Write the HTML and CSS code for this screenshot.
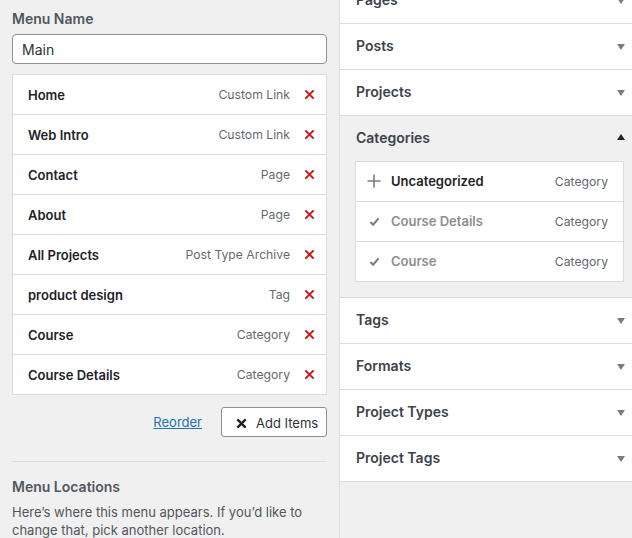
FILE: index.html
```html
<!DOCTYPE html>
<html lang="en">
<head>
<meta charset="utf-8">
<title>Menus</title>
<link rel="stylesheet" href="styles.css">
</head>
<body>
<div class="page">
  <aside class="menu-panel">
    <label class="field-label" for="menu-name">Menu Name</label>
    <input id="menu-name" class="name-input" type="text" value="Main">
    <ul class="menu-items">
      <li class="menu-item"><span class="item-title">Home</span><span class="item-type">Custom Link</span><span class="remove"><svg viewBox="0 0 12 12" width="11" height="11"><path d="M1.5 1.5L10.5 10.5M10.5 1.5L1.5 10.5"/></svg></span></li>
      <li class="menu-item"><span class="item-title">Web Intro</span><span class="item-type">Custom Link</span><span class="remove"><svg viewBox="0 0 12 12" width="11" height="11"><path d="M1.5 1.5L10.5 10.5M10.5 1.5L1.5 10.5"/></svg></span></li>
      <li class="menu-item"><span class="item-title">Contact</span><span class="item-type">Page</span><span class="remove"><svg viewBox="0 0 12 12" width="11" height="11"><path d="M1.5 1.5L10.5 10.5M10.5 1.5L1.5 10.5"/></svg></span></li>
      <li class="menu-item"><span class="item-title">About</span><span class="item-type">Page</span><span class="remove"><svg viewBox="0 0 12 12" width="11" height="11"><path d="M1.5 1.5L10.5 10.5M10.5 1.5L1.5 10.5"/></svg></span></li>
      <li class="menu-item"><span class="item-title">All Projects</span><span class="item-type">Post Type Archive</span><span class="remove"><svg viewBox="0 0 12 12" width="11" height="11"><path d="M1.5 1.5L10.5 10.5M10.5 1.5L1.5 10.5"/></svg></span></li>
      <li class="menu-item"><span class="item-title">product design</span><span class="item-type">Tag</span><span class="remove"><svg viewBox="0 0 12 12" width="11" height="11"><path d="M1.5 1.5L10.5 10.5M10.5 1.5L1.5 10.5"/></svg></span></li>
      <li class="menu-item"><span class="item-title">Course</span><span class="item-type">Category</span><span class="remove"><svg viewBox="0 0 12 12" width="11" height="11"><path d="M1.5 1.5L10.5 10.5M10.5 1.5L1.5 10.5"/></svg></span></li>
      <li class="menu-item"><span class="item-title">Course Details</span><span class="item-type">Category</span><span class="remove"><svg viewBox="0 0 12 12" width="11" height="11"><path d="M1.5 1.5L10.5 10.5M10.5 1.5L1.5 10.5"/></svg></span></li>
    </ul>
    <div class="actions">
      <a class="reorder" href="#">Reorder</a>
      <button class="add-items" type="button"><svg viewBox="0 0 12 12" width="11" height="11"><path d="M1.5 1.5L10.5 10.5M10.5 1.5L1.5 10.5"/></svg><span>Add Items</span></button>
    </div>
    <div class="divider"></div>
    <h3 class="locations-title">Menu Locations</h3>
    <p class="locations-text">Here’s where this menu appears. If you’d like to change that, pick another location.</p>
  </aside>

  <main class="library">
    <section class="acc">
      <h3 class="acc-head"><span>Pages</span><i class="arrow down"></i></h3>
    </section>
    <section class="acc">
      <h3 class="acc-head"><span>Posts</span><i class="arrow down"></i></h3>
    </section>
    <section class="acc">
      <h3 class="acc-head"><span>Projects</span><i class="arrow down"></i></h3>
    </section>
    <section class="acc open">
      <h3 class="acc-head"><span>Categories</span><i class="arrow up"></i></h3>
      <ul class="cat-list">
        <li class="cat-item"><span class="cat-icon"><svg viewBox="0 0 14 14" width="14" height="14"><path d="M7 0.5V13.5M0.5 7H13.5" class="plus"/></svg></span><span class="cat-title">Uncategorized</span><span class="cat-type">Category</span></li>
        <li class="cat-item added"><span class="cat-icon"><svg viewBox="0 0 12 12" width="11" height="11"><path d="M1.5 6.5L4.5 9.5L10.5 2.5" class="check"/></svg></span><span class="cat-title">Course Details</span><span class="cat-type">Category</span></li>
        <li class="cat-item added"><span class="cat-icon"><svg viewBox="0 0 12 12" width="11" height="11"><path d="M1.5 6.5L4.5 9.5L10.5 2.5" class="check"/></svg></span><span class="cat-title">Course</span><span class="cat-type">Category</span></li>
      </ul>
    </section>
    <section class="acc">
      <h3 class="acc-head"><span>Tags</span><i class="arrow down"></i></h3>
    </section>
    <section class="acc">
      <h3 class="acc-head"><span>Formats</span><i class="arrow down"></i></h3>
    </section>
    <section class="acc">
      <h3 class="acc-head"><span>Project Types</span><i class="arrow down"></i></h3>
    </section>
    <section class="acc">
      <h3 class="acc-head"><span>Project Tags</span><i class="arrow down"></i></h3>
    </section>
  </main>
</div>
</body>
</html>
```

FILE: styles.css
```css
* { box-sizing: border-box; }

html, body {
  margin: 0;
  padding: 0;
  height: 538px;
  overflow: hidden;
  background: #f0f0f1;
  font-family: Inter, "Liberation Sans", Arial, sans-serif;
  color: #1d2327;
  -webkit-font-smoothing: antialiased;
}

.page {
  display: flex;
  height: 538px;
}

/* left panel */
.menu-panel {
  width: 340px;
  flex: 0 0 340px;
  border-right: 1px solid #dcdcde;
  padding: 9px 12px 0 12px;
  display: flex;
  flex-direction: column;
}

.field-label {
  display: block;
  height: 20px;
  font-size: 14px;
  line-height: 20px;
  font-weight: 600;
  color: #50575e;
}

.name-input {
  margin: 5px 0 0 0;
  width: 315px;
  height: 30px;
  flex: 0 0 30px;
  border: 1px solid #8c8f94;
  border-radius: 4px;
  padding: 0 9px;
  font-family: inherit;
  font-size: 14px;
  color: #2c3338;
  background: #fff;
  outline: none;
}

.menu-items {
  list-style: none;
  margin: 10px 0 0 0;
  padding: 0;
  width: 315px;
  background: #fff;
  border: 1px solid #dcdcde;
}

.menu-item {
  display: flex;
  align-items: center;
  height: 40px;
  padding: 0 11px 0 15px;
  border-top: 1px solid #dcdcde;
}
.menu-item:first-child {
  height: 39px;
  border-top: 0;
}

.item-title {
  flex: 1;
  font-size: 13px;
  font-weight: 600;
  color: #1d2327;
}

.item-type {
  font-size: 12.2px;
  color: #646970;
}

.remove {
  display: flex;
  margin-left: 14px;
}
.remove svg path {
  stroke: #cc1818;
  stroke-width: 2.2;
  fill: none;
}

.actions {
  display: flex;
  justify-content: flex-end;
  align-items: center;
  gap: 19px;
  margin-top: 12px;
  width: 315px;
}

.reorder {
  font-size: 13px;
  color: #2271b1;
  text-decoration: underline;
}

.add-items {
  display: flex;
  align-items: center;
  gap: 9px;
  width: 106px;
  height: 30px;
  padding: 2px 0 0 14px;
  background: #fff;
  border: 1px solid #8c8f94;
  border-radius: 3px;
  font-family: inherit;
  font-size: 13px;
  color: #2c3338;
}
.add-items svg path {
  stroke: #1d2327;
  stroke-width: 2.6;
  fill: none;
}

.divider {
  margin-top: 24px;
  width: 315px;
  border-top: 1px solid #dcdcde;
}

.locations-title {
  margin: 15px 0 0 0;
  font-size: 14px;
  line-height: 20px;
  font-weight: 600;
  color: #50575e;
}

.locations-text {
  margin: 6px 0 0 0;
  font-size: 13px;
  line-height: 18px;
  color: #50575e;
}

/* right panel */
.library {
  flex: 1;
  margin-top: -22px;
}

.acc {
  background: #fff;
  border-bottom: 1px solid #dcdcde;
}
.acc.open {
  background: #f0f0f1;
  padding-bottom: 15px;
}

.acc-head {
  margin: 0;
  height: 45px;
  display: flex;
  align-items: center;
  justify-content: space-between;
  padding: 0 7px 3px 16px;
  font-size: 14px;
  font-weight: 600;
  color: #3c434a;
}

.arrow {
  width: 0;
  height: 0;
  border-left: 4px solid transparent;
  border-right: 4px solid transparent;
}
.arrow.down {
  margin-top: 3px;
  border-top: 6px solid #787c82;
}
.arrow.up {
  border-bottom: 6px solid #1d2327;
}

.cat-list {
  list-style: none;
  margin: 0 8px 0 15px;
  padding: 0;
  background: #fff;
  border: 1px solid #dcdcde;
}

.cat-item {
  display: flex;
  align-items: center;
  height: 40px;
  padding: 0 15px 1px 11px;
  border-top: 1px solid #dcdcde;
}
.cat-item:first-child {
  height: 39px;
  border-top: 0;
}

.cat-icon {
  width: 14px;
  display: flex;
  justify-content: center;
  margin-right: 10px;
}
.cat-icon .plus {
  stroke: #787c82;
  stroke-width: 1.6;
  fill: none;
}
.cat-icon .check {
  stroke: #787c82;
  stroke-width: 2.2;
  fill: none;
}

.cat-title {
  flex: 1;
  font-size: 13px;
  font-weight: 600;
  color: #1d2327;
}
.cat-item.added .cat-title {
  color: #8c8f94;
}

.cat-type {
  font-size: 12.2px;
  color: #646970;
}
```
